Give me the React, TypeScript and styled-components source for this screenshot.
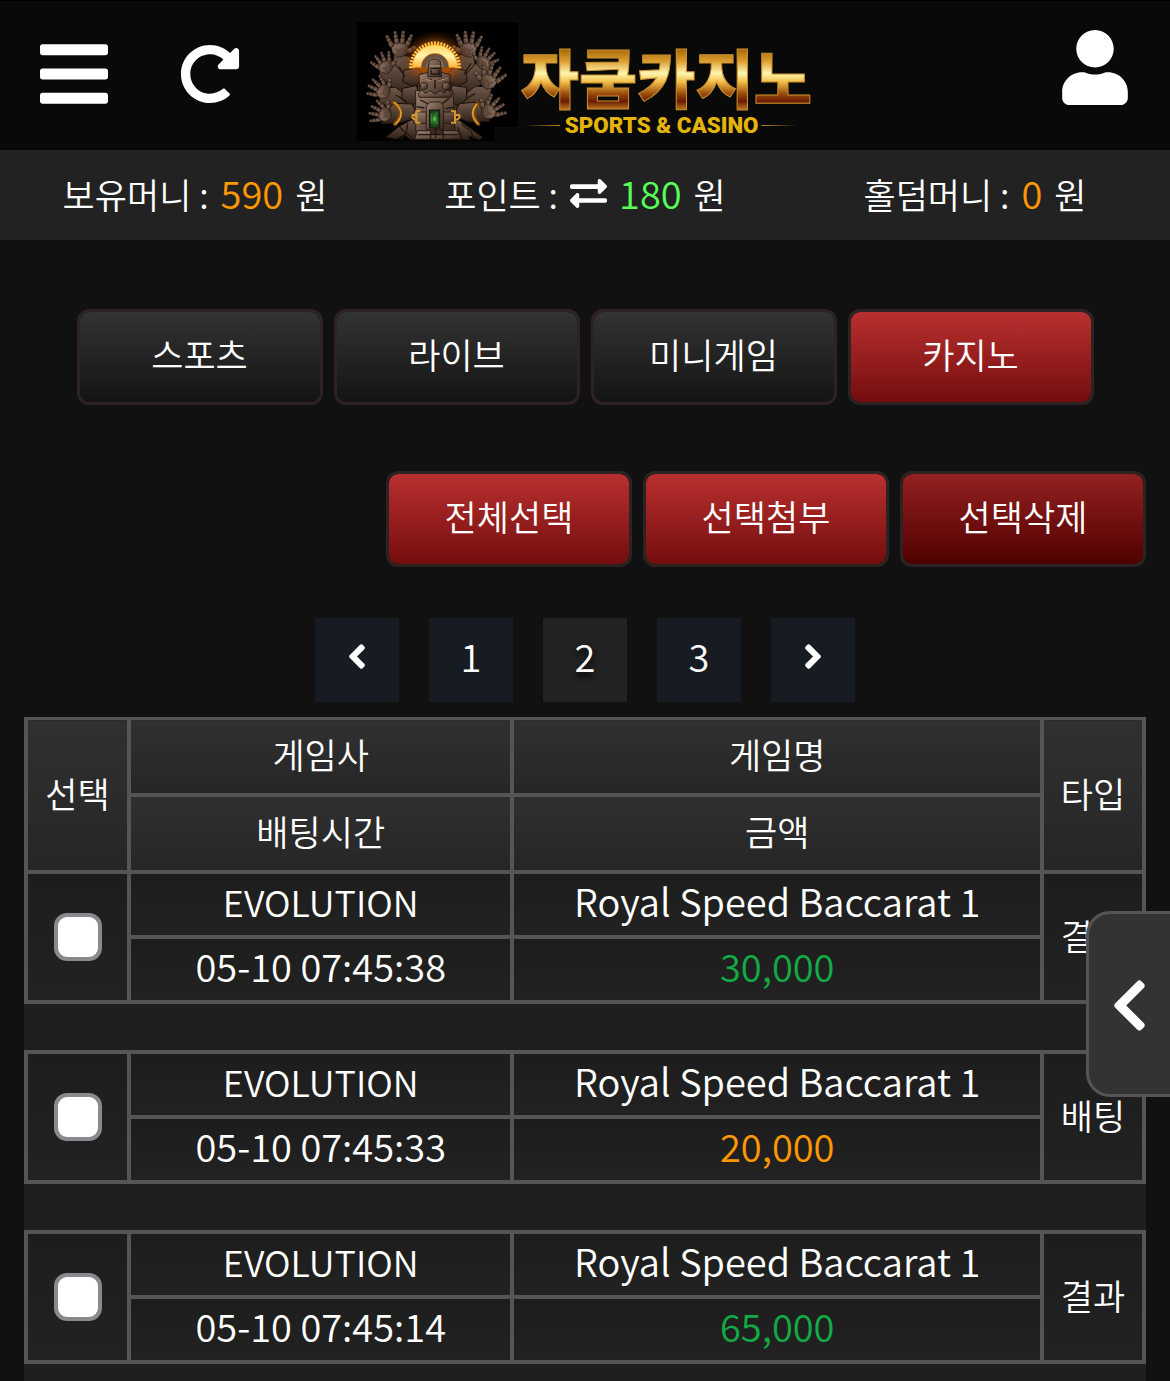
import React, { Fragment, useState } from "react";
import styled, { createGlobalStyle, css } from "styled-components";
import {
  FaAngleLeft,
  FaAngleRight,
  FaBars,
  FaChevronLeft,
  FaExchangeAlt,
  FaRedoAlt,
  FaUser,
} from "react-icons/fa";

const GlobalStyle = createGlobalStyle`
  *, *::before, *::after { box-sizing: border-box; }
  body {
    margin: 0;
    background: #111;
    color: #fff;
    font-family: "Noto Sans CJK KR", sans-serif;
    font-size: 35px;
    font-weight: 350;
    line-height: 48px;
  }
  button { font: inherit; color: inherit; cursor: pointer; }
`;

const Shell = styled.div`
  display: flex;
  flex-direction: column;
  height: 100vh;
  overflow: hidden;
`;

const Header = styled.header`
  display: grid;
  grid-template-columns: 1fr auto 1fr;
  align-items: start;
  flex: none;
  height: 150px;
  padding: 21px 42px 0 40px;
  background: #090909;
  border-top: 1px solid #000;
`;

const HeaderGroup = styled.div<{ $end?: boolean }>`
  display: flex;
  align-items: center;
  gap: 72px;
  padding-top: ${(p) => (p.$end ? 8 : 13)}px;
  justify-content: ${(p) => (p.$end ? "flex-end" : "flex-start")};
`;

const IconButton = styled.button<{ $width: number; $height: number }>`
  display: flex;
  padding: 0;
  border: 0;
  background: none;
  svg {
    width: ${(p) => p.$width}px;
    height: ${(p) => p.$height}px;
  }
`;

const LogoLink = styled.a`
  display: block;
  width: 454px;
  svg {
    display: block;
    width: 100%;
  }
`;

const StatusBar = styled.section`
  display: grid;
  grid-template-columns: repeat(3, 1fr);
  align-items: center;
  flex: none;
  height: 90px;
  padding-bottom: 4px;
  background: #222;
  white-space: nowrap;
`;

const StatusItem = styled.p`
  display: flex;
  align-items: baseline;
  justify-content: center;
  gap: 12px;
  margin: 0;
  svg {
    align-self: center;
    width: 37px;
    height: 37px;
  }
`;

const Amount = styled.span<{ $color: string }>`
  font-size: 38px;
  color: ${(p) => p.$color};
`;

const Main = styled.main`
  flex: 1;
  min-height: 0;
  overflow-y: auto;
  scrollbar-width: none;
  padding: 69px 24px 0;
`;

const ButtonRow = styled.div<{ $align: string; $space: number }>`
  display: flex;
  gap: 11px;
  justify-content: ${(p) => p.$align};
  margin-bottom: ${(p) => p.$space}px;
`;

const fills = {
  dark: css`
    background: linear-gradient(#333, #141414) padding-box;
  `,
  red: css`
    background: linear-gradient(#b93030, #750d0d) padding-box;
  `,
  deep: css`
    background: linear-gradient(#942121, #500000) padding-box;
  `,
};

const GameButton = styled.button<{ $fill: keyof typeof fills }>`
  width: 246px;
  height: 96px;
  padding: 0 0 6px;
  border: 3px solid #2e2323;
  border-radius: 12px;
  ${(p) => fills[p.$fill]}
`;

const Pager = styled.nav`
  display: flex;
  justify-content: center;
  gap: 30px;
  margin-bottom: 15px;
`;

const PageButton = styled.button<{ $current?: boolean }>`
  display: flex;
  align-items: center;
  justify-content: center;
  width: 84px;
  height: 84px;
  padding: 0 0 8px;
  border: 0;
  font-size: 38px;
  background: ${(p) => (p.$current ? "#222" : "#171b22")};
  text-shadow: ${(p) => (p.$current ? "0 4px 6px #000" : "none")};
  svg {
    width: 20px;
    height: 39px;
  }
`;

const BetTable = styled.table`
  width: 100%;
  table-layout: fixed;
  border-collapse: collapse;
  background: #1f1f1f;
  text-align: center;
`;

const Col = styled.col<{ $width?: string }>`
  width: ${(p) => p.$width ?? "auto"};
`;

const cell = css`
  padding: 0 0 4px;
  border: 4px solid #555;
  font-weight: 350;
  white-space: nowrap;
`;

const HeadCell = styled.th`
  ${cell}
  height: 77px;
  background: linear-gradient(#303030, #262626);
`;

const HeadRow = styled.tr`
  &:first-child ${HeadCell} {
    height: 76px;
    border-top-width: 3px;
  }
`;

const Cell = styled.td<{ $color?: string; $size?: number; $flush?: boolean }>`
  ${cell}
  height: 65px;
  padding-bottom: ${(p) => (p.$flush ? 0 : p.$size ? 6 : 4)}px;
  color: ${(p) => p.$color ?? "#fff"};
  font-size: ${(p) => p.$size ?? 35}px;
  background: linear-gradient(#1d1d1d, #222);
`;

const SpacerCell = styled.td`
  height: 50px;
  padding: 0;
`;

const Check = styled.input`
  appearance: none;
  display: block;
  width: 48px;
  height: 48px;
  margin: 0 auto;
  border: 4px solid #8a8a8e;
  border-radius: 13px;
  background: #fff;
  &:checked {
    background: #b93030;
  }
`;

const DrawerTab = styled.button`
  position: fixed;
  right: 0;
  bottom: 284px;
  display: flex;
  align-items: center;
  justify-content: center;
  width: 84px;
  height: 186px;
  padding: 2px 0 0;
  border: 3px solid #555;
  border-right: 0;
  border-radius: 24px 0 0 24px;
  background: #333;
  svg {
    width: 37px;
    height: 59px;
  }
`;

/* A stone hand pointing up; four jointed fingers and a thumb. */
function Hand({ x, y, turn, size = 1, flip }: { x: number; y: number; turn: number; size?: number; flip?: boolean }) {
  const fingers = [
    [-27, -10, -26],
    [-9, -20, -8],
    [10, -20, 8],
    [27, -10, 26],
  ];
  return (
    <g transform={`translate(${x} ${y}) rotate(${turn}) scale(${flip ? -size : size} ${size})`}>
      <path d="M-30-12Q0-27 31-10L27 18Q14 34-10 32L-26 16Z" fill="url(#stone)" stroke="#1c120c" strokeWidth="2" />
      {fingers.map(([fx, fy, angle]) => (
        <g key={fx} transform={`translate(${fx} ${fy}) rotate(${angle})`} fill="url(#stone)" stroke="#1c120c" strokeWidth="1.6">
          <rect x="-8" y="-16" width="16" height="22" rx="6" />
          <rect x="-7" y="-29" width="14" height="16" rx="5" />
          <rect x="-6" y="-40" width="12" height="13" rx="6" />
        </g>
      ))}
      <g transform="translate(30 12) rotate(62)" fill="url(#stone)" stroke="#1c120c" strokeWidth="1.6">
        <rect x="-8" y="-16" width="16" height="22" rx="6" />
        <rect x="-7" y="-30" width="14" height="16" rx="6" />
      </g>
      <path d="M-18 0l12 9 17-5M-5 9l-3 14" fill="none" stroke="#3d2b20" strokeWidth="2" />
    </g>
  );
}

function Halo() {
  const rays = Array.from({ length: 25 }, (_, i) => 180 + i * 7.5);
  return (
    <g transform="translate(258 202)">
      <ellipse cx="0" cy="-20" rx="105" ry="92" fill="url(#glow)" />
      {rays.map((a) => (
        <rect key={a} x="60" y="-3" width="18" height="6" rx="2" fill="#ffc545" transform={`rotate(${a})`} />
      ))}
      <path d="M-68 0A68 68 0 0 1 68 0H42A42 42 0 0 0-42 0Z" fill="url(#halo)" stroke="#f19a22" strokeWidth="2" />
      <path d="M-40 0A40 40 0 0 1 40 0Z" fill="#65503f" />
      <path d="M-28 0A28 30 0 0 1 28 0Z" fill="#806756" />
    </g>
  );
}

function Logo() {
  return (
    <svg viewBox="24 66 1362 357" role="img" aria-label="자쿰카지노 SPORTS & CASINO">
      <defs>
        <linearGradient id="stone" x1="0" y1="0" x2="1" y2="1">
          <stop offset="0" stopColor="#9a8170" />
          <stop offset=".5" stopColor="#6b5345" />
          <stop offset="1" stopColor="#33241b" />
        </linearGradient>
        <linearGradient id="shade" x1="0" y1="0" x2="0" y2="1">
          <stop offset="0" stopColor="#6f5849" />
          <stop offset="1" stopColor="#2c1f17" />
        </linearGradient>
        <linearGradient id="halo" x1="0" y1="0" x2="0" y2="1">
          <stop offset="0" stopColor="#ffd257" />
          <stop offset=".5" stopColor="#fff4ad" />
          <stop offset="1" stopColor="#ffb63c" />
        </linearGradient>
        <radialGradient id="glow">
          <stop offset=".5" stopColor="#c75f0c" stopOpacity=".8" />
          <stop offset="1" stopColor="#401600" stopOpacity="0" />
        </radialGradient>
        <radialGradient id="gem">
          <stop offset="0" stopColor="#59ef46" />
          <stop offset=".35" stopColor="#2a7424" />
          <stop offset="1" stopColor="#19341a" />
        </radialGradient>
        <linearGradient id="gold" gradientUnits="userSpaceOnUse" x1="0" y1="150" x2="0" y2="325">
          <stop offset="0" stopColor="#a96b0d" />
          <stop offset=".18" stopColor="#d99a2c" />
          <stop offset=".4" stopColor="#fff6b0" />
          <stop offset=".55" stopColor="#f2bd48" />
          <stop offset=".75" stopColor="#9a4c0c" />
          <stop offset=".88" stopColor="#6b1a04" />
          <stop offset="1" stopColor="#b06a1c" />
        </linearGradient>
        <linearGradient id="rule">
          <stop offset="0" stopColor="#b98b12" stopOpacity="0" />
          <stop offset="1" stopColor="#b98b12" />
        </linearGradient>
        <linearGradient id="ruleBack">
          <stop offset="0" stopColor="#b98b12" />
          <stop offset="1" stopColor="#b98b12" stopOpacity="0" />
        </linearGradient>
      </defs>

      <path d="M24 66H507V381H436V423H24Z" fill="#000" />
      <g fill="url(#shade)" stroke="#160e09" strokeWidth="3" strokeLinejoin="round">
        <path d="M135 160l48 10 15 55 30 25-20 70-60-40-15-60Z" />
        <path d="M372 155l-46 12-16 50-28 30 22 75 58-44 20-62Z" />
        <path d="M85 190l45-8 33 40 44 20-6 50-55-15-52-48Z" />
        <path d="M425 195l-44-5-35 38-42 18 8 48 54-14 50-46Z" />
        <path d="M90 262l50 0 40 30 28 10-6 45-50-10-60-30Z" />
        <path d="M428 262l-48-4-45 34-28 12 8 44 50-12 56-30Z" />
        <path d="M165 210l38-6 22 28-30 30-34-18Z" />
        <path d="M350 212l-36-8-22 26 30 32 32-18Z" />
        <path d="M160 265l42-8 14 38-32 26-26-24Z" />
        <path d="M352 262l-42-6-12 38 30 26 26-24Z" />
        <path d="M94 330l50-20 45 2 18 40-50 16-60 4Z" />
        <path d="M425 325l-50-18-44 4-18 38 48 18 60-2Z" />
        <path d="M186 360l-34 18-42 34 34 6 22-14 20 16 70-2 108 2-4-12 32 12 10-8-42-30-30-22Z" />
      </g>
      <path
        d="M150 378l20 22-14 20M176 370l-4 30 22 18M338 372l28 22 8 24M326 380l12 34M150 200l18 30M366 190l-22 34M140 285l34 20M378 280l-30 20"
        fill="none"
        stroke="#24170f"
        strokeWidth="4"
      />
      <Hand x={152} y={144} turn={-2} size={0.86} />
      <Hand x={358} y={144} turn={4} size={0.86} flip />
      <Hand x={108} y={198} turn={-30} size={0.72} />
      <Hand x={404} y={184} turn={38} size={0.72} flip />
      <Hand x={100} y={272} turn={-55} size={0.76} />
      <Hand x={420} y={240} turn={28} size={0.86} flip />
      <Hand x={104} y={342} turn={-72} size={0.74} />
      <Hand x={422} y={332} turn={52} size={0.8} flip />
      <g fill="none" strokeLinecap="round">
        <path d="M134 308Q172 338 138 372" stroke="#7b4a0b" strokeWidth="12" />
        <path d="M136 308Q174 338 140 372" stroke="#e0a02f" strokeWidth="5" />
        <path d="M386 312Q360 342 388 372" stroke="#7b4a0b" strokeWidth="12" />
        <path d="M383 313Q358 342 386 370" stroke="#e0a02f" strokeWidth="5" />
      </g>
      <Halo />
      <g fill="url(#stone)" stroke="#20150e" strokeWidth="2.5" strokeLinejoin="round">
        <path d="M200 272h112l6 120-118 2Z" />
        <path d="M210 224l24-6h46l24 6-4 46-24 14h-34l-30-14Z" />
        <path d="M240 184q17-14 34 0l4 46h-42Z" />
        <circle cx="225" cy="258" r="11" />
        <circle cx="291" cy="258" r="11" />
        <path d="M208 280l10-10 12 10 12-8 16 10 16-10 12 8 10-10 14 10-4 12h-96Z" />
        <path d="M194 336h38v34h-38ZM282 336h34v34h-34Z" />
        <path d="M232 318l10-12h32l10 12v70h-52Z" />
        <path d="M205 392h40v26h-48ZM245 400h38v18h-38ZM283 392h42l12 26h-54Z" />
      </g>
      <path
        d="M244 205h30M245 222h28M222 238h26M270 238h24M246 210v12M270 210v12M258 240v26M214 300l24 12M300 296l-20 14M202 320l24 4M312 322l-22 4M206 404h120M260 384v30"
        fill="none"
        stroke="#21150e"
        strokeWidth="4"
      />
      <path d="M220 236l26 5M296 236l-26 5M242 198h32" fill="none" stroke="#b49a84" strokeWidth="3" />
      <rect x="241" y="330" width="31" height="54" fill="url(#gem)" stroke="#1c130d" strokeWidth="3" />
      <path d="M248 340v30M265 336l-6 14 7 22" fill="none" stroke="#5fae4a" strokeWidth="1.5" />
      <g fill="none" stroke="#d6982e" strokeWidth="6">
        <path d="M214 334h-12v34h12M202 345h-11q-4 12 9 14" />
        <path d="M306 334h12v34h-12M318 345h13q4 12-11 14" />
      </g>

      <text
        x="952"
        y="308"
        textAnchor="middle"
        fontFamily='"Noto Sans CJK KR", sans-serif'
        fontWeight="900"
        fontSize="190"
        fill="url(#gold)"
        stroke="#c98f2b"
        strokeWidth="3"
      >
        자쿰카지노
      </text>
      <path d="M525 375h108v3H525Z" fill="url(#rule)" />
      <path d="M1238 375h108v3h-108Z" fill="url(#ruleBack)" />
      <text
        x="938"
        y="400"
        textAnchor="middle"
        fontFamily="Roboto, sans-serif"
        fontWeight="900"
        fontSize="67"
        fill="#e3b50c"
      >
        SPORTS &amp; CASINO
      </text>
    </svg>
  );
}

const categories = ["스포츠", "라이브", "미니게임", "카지노"];

const records = [
  { time: "05-10 07:45:38", amount: "30,000", color: "#13aa45", type: "결과" },
  { time: "05-10 07:45:33", amount: "20,000", color: "#ff9800", type: "배팅" },
  { time: "05-10 07:45:14", amount: "65,000", color: "#13aa45", type: "결과" },
];

export default function App() {
  const [category, setCategory] = useState("카지노");
  const [picked, setPicked] = useState<string[]>([]);

  const toggle = (time: string) =>
    setPicked((list) => (list.includes(time) ? list.filter((t) => t !== time) : [...list, time]));

  return (
    <>
      <GlobalStyle />
      <Shell>
        <Header>
          <HeaderGroup>
            <IconButton $width={68} $height={78} aria-label="메뉴">
              <FaBars />
            </IconButton>
            <IconButton $width={60} $height={60} aria-label="새로고침">
              <FaRedoAlt />
            </IconButton>
          </HeaderGroup>
          <LogoLink href="#">
            <Logo />
          </LogoLink>
          <HeaderGroup $end>
            <IconButton $width={66} $height={75} aria-label="내 정보">
              <FaUser />
            </IconButton>
          </HeaderGroup>
        </Header>

        <StatusBar>
          <StatusItem>
            <span>보유머니 :</span>
            <Amount $color="#ff9800">590</Amount>
            <span>원</span>
          </StatusItem>
          <StatusItem>
            <span>포인트 :</span>
            <FaExchangeAlt />
            <Amount $color="#57ff57">180</Amount>
            <span>원</span>
          </StatusItem>
          <StatusItem>
            <span>홀덤머니 :</span>
            <Amount $color="#ff9800">0</Amount>
            <span>원</span>
          </StatusItem>
        </StatusBar>

        <Main>
          <ButtonRow $align="center" $space={66}>
            {categories.map((name) => (
              <GameButton key={name} $fill={name === category ? "red" : "dark"} onClick={() => setCategory(name)}>
                {name}
              </GameButton>
            ))}
          </ButtonRow>

          <ButtonRow $align="flex-end" $space={51}>
            <GameButton $fill="red" onClick={() => setPicked(records.map((r) => r.time))}>
              전체선택
            </GameButton>
            <GameButton $fill="red">선택첨부</GameButton>
            <GameButton $fill="deep">선택삭제</GameButton>
          </ButtonRow>

          <Pager>
            <PageButton aria-label="이전">
              <FaAngleLeft />
            </PageButton>
            <PageButton>1</PageButton>
            <PageButton $current aria-current="page">
              2
            </PageButton>
            <PageButton>3</PageButton>
            <PageButton aria-label="다음">
              <FaAngleRight />
            </PageButton>
          </Pager>

          <BetTable>
            <colgroup>
              <Col $width="103px" />
              <Col $width="34.3%" />
              <Col />
              <Col $width="102px" />
            </colgroup>
            <thead>
              <HeadRow>
                <HeadCell rowSpan={2}>선택</HeadCell>
                <HeadCell>게임사</HeadCell>
                <HeadCell>게임명</HeadCell>
                <HeadCell rowSpan={2}>타입</HeadCell>
              </HeadRow>
              <HeadRow>
                <HeadCell>배팅시간</HeadCell>
                <HeadCell>금액</HeadCell>
              </HeadRow>
            </thead>
            <tbody>
              {records.map((r) => (
                <Fragment key={r.time}>
                  <tr>
                    <Cell rowSpan={2} $flush>
                      <Check
                        type="checkbox"
                        aria-label={r.time}
                        checked={picked.includes(r.time)}
                        onChange={() => toggle(r.time)}
                      />
                    </Cell>
                    <Cell $size={36}>EVOLUTION</Cell>
                    <Cell $size={38}>Royal Speed Baccarat 1</Cell>
                    <Cell rowSpan={2}>{r.type}</Cell>
                  </tr>
                  <tr>
                    <Cell $size={38}>{r.time}</Cell>
                    <Cell $size={38} $color={r.color}>
                      {r.amount}
                    </Cell>
                  </tr>
                  <tr>
                    <SpacerCell colSpan={4} />
                  </tr>
                </Fragment>
              ))}
            </tbody>
          </BetTable>
        </Main>

        <DrawerTab aria-label="사이드 메뉴 열기">
          <FaChevronLeft />
        </DrawerTab>
      </Shell>
    </>
  );
}
